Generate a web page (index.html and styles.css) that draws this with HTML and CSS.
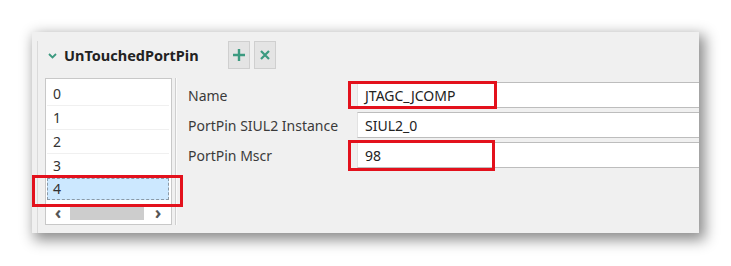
FILE: index.html
```html
<!DOCTYPE html>
<html lang="en">
<head>
    <meta charset="UTF-8">
    <title>UnTouchedPortPin</title>
    <link rel="stylesheet" href="styles.css">
</head>
<body>
    <div class="panel">
        <div class="inner">
            <!-- Header with title and add / remove buttons -->
            <div class="header">
                <svg class="chevron" width="9" height="6" viewBox="0 0 9 6"><path d="M1 1 L4.5 4.5 L8 1" fill="none" stroke="#3c9a80" stroke-width="1.8"/></svg>
                <span class="title">UnTouchedPortPin</span>
                <button class="tool-btn" title="Add">
                    <svg width="14" height="14" viewBox="0 0 14 14"><path d="M7 1 V13 M1 7 H13" stroke="#3c9a80" stroke-width="2.4"/></svg>
                </button>
                <button class="tool-btn" title="Remove">
                    <svg width="12" height="12" viewBox="0 0 12 12"><path d="M2 2 L10 10 M10 2 L2 10" stroke="#3c9a80" stroke-width="2.2"/></svg>
                </button>
            </div>

            <div class="content">
                <!-- Index list -->
                <div class="list-box">
                    <div class="rows">
                        <div class="row">0</div>
                        <div class="row">1</div>
                        <div class="row">2</div>
                        <div class="row">3</div>
                        <div class="row selected">4</div>
                    </div>
                    <div class="hscroll">
                        <span class="arrow">&lsaquo;</span>
                        <span class="thumb"></span>
                        <span class="arrow">&rsaquo;</span>
                    </div>
                </div>
                <div class="splitter"></div>

                <!-- Properties form -->
                <div class="form">
                    <div class="field">
                        <label>Name</label>
                        <div class="input">JTAGC_JCOMP</div>
                    </div>
                    <div class="field">
                        <label>PortPin SIUL2 Instance</label>
                        <div class="input">SIUL2_0</div>
                    </div>
                    <div class="field">
                        <label>PortPin Mscr</label>
                        <div class="input">98</div>
                    </div>
                </div>
            </div>
        </div>
    </div>

    <!-- Red highlight marks -->
    <div class="mark mark-name"></div>
    <div class="mark mark-mscr"></div>
    <div class="mark mark-row"></div>
</body>
</html>
```

FILE: styles.css
```css
* { margin: 0; padding: 0; box-sizing: border-box; }
body {
    font-family: "Noto Sans", "Open Sans", sans-serif;
    color: #333;
    background: #fff;
    width: 731px;
    height: 266px;
    position: relative;
    overflow: hidden;
}
.panel {
    margin: 32px 0 0 32px;
    width: 667px;
    height: 201px;
    background: #f0f0f0;
    box-shadow: 4px 5px 13px 2px rgba(0, 0, 0, 0.45);
    padding-left: 5px;
    overflow: hidden;
}
.inner {
    height: 100%;
    border-left: 1px solid #dadada;
}
.header {
    display: flex;
    align-items: center;
    height: 28px;
    margin-top: 9px;
    padding-left: 10px;
}
.chevron { margin-right: 7px; margin-top: 2px; }
.title {
    font-size: 14.5px;
    font-weight: bold;
    color: #222;
    margin-right: 29px;
}
.tool-btn {
    width: 22px;
    height: 28px;
    margin-right: 4px;
    background: #e4e4e4;
    border: 1px solid #cfcfcf;
    display: flex;
    align-items: center;
    justify-content: center;
}
.content {
    display: flex;
    margin-top: 9px;
    height: 147px;
}
.list-box {
    margin-left: 7px;
    width: 127px;
    height: 147px;
    border: 1px solid #c8c8c8;
    background: #fff;
    padding: 3px 2px 0 1px;
}
.rows { height: 120px; }
.row {
    height: 24px;
    line-height: 24px;
    padding-left: 6px;
    font-size: 14px;
    border-bottom: 1px solid #f0f0f0;
}
.row.selected {
    background: #cce8ff;
    border: 1px dashed #8a99a6;
    height: 22px;
    line-height: 20px;
    padding-left: 5px;
}
.hscroll {
    display: flex;
    align-items: center;
    height: 17px;
    margin-top: 2px;
}
.arrow {
    width: 22px;
    text-align: center;
    font-size: 18px;
    font-weight: bold;
    line-height: 17px;
    color: #555;
}
.thumb {
    flex: 1;
    height: 15px;
    background: #cdcdcd;
    margin: 0 3px 0 1px;
}
.splitter {
    width: 2px;
    margin-left: 3px;
    border-left: 1px solid #cfcfcf;
    border-right: 1px solid #fafafa;
}
.form {
    flex: 1;
    padding: 4px 0 0 11px;
    display: flex;
    flex-direction: column;
    gap: 4px;
}
.field {
    display: flex;
    align-items: center;
    height: 26px;
}
.field label {
    width: 169px;
    font-size: 14px;
    color: #3a3a3a;
    padding-top: 1px;
}
.input {
    flex: 1;
    height: 26px;
    line-height: 25px;
    background: #fff;
    border-top: 1px solid #bdbdbd;
    border-bottom: 1px solid #bdbdbd;
    border-left: 1px solid #e2e2e2;
    padding-left: 7px;
    font-size: 14px;
    color: #222;
}
.mark {
    position: absolute;
    border: 3px solid #e3111c;
}
.mark-name { left: 348px; top: 81px; width: 149px; height: 28px; }
.mark-mscr { left: 348px; top: 140px; width: 147px; height: 31px; }
.mark-row { left: 32px; top: 175px; width: 151px; height: 32px; }
```
